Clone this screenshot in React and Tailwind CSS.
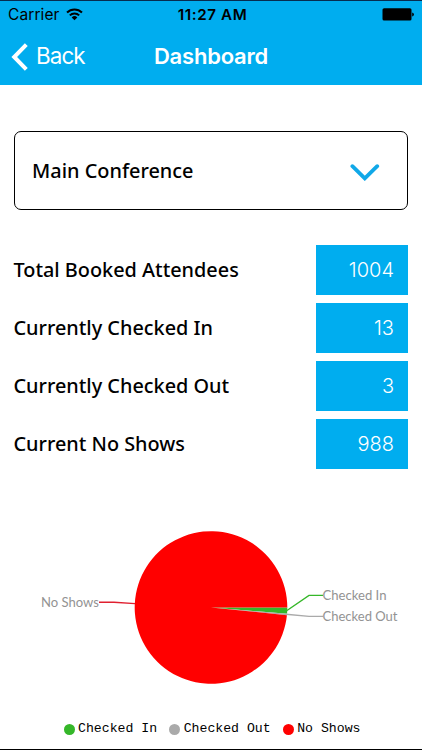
const STATS = [
  { label: 'Total Booked Attendees', value: 1004 },
  { label: 'Currently Checked In', value: 13 },
  { label: 'Currently Checked Out', value: 3 },
  { label: 'Current No Shows', value: 988 },
];

const SLICES = [
  { label: 'Checked In', value: 13, color: '#35b729' },
  { label: 'Checked Out', value: 3, color: '#aaaaaa' },
  { label: 'No Shows', value: 988, color: '#ff0000' },
];

const CX = 211;
const CY = 107.5;
const R = 76.3;

const slicePath = (from, to) => {
  const x1 = CX + R * Math.cos(from);
  const y1 = CY + R * Math.sin(from);
  const x2 = CX + R * Math.cos(to);
  const y2 = CY + R * Math.sin(to);
  return `M${CX} ${CY} L${x1} ${y1} A${R} ${R} 0 ${to - from > Math.PI ? 1 : 0} 1 ${x2} ${y2} Z`;
};

const StatusBar = () => (
  <div className="relative flex h-[28px] items-center justify-between pl-2 pr-[8px] text-black">
    <div className="flex items-center gap-[6px]">
      <span className="text-[15.5px] leading-none tracking-[0.1px]">Carrier</span>
      <svg width="17" height="13" viewBox="0 0 17 13" fill="none" stroke="black" strokeWidth="2" className="mb-[2px]">
        <path d="M1 4.5a10.7 10.7 0 0 1 15 0" />
        <path d="M3.8 7.4a6.7 6.7 0 0 1 9.4 0" />
        <path d="M8.5 12.2 5.7 9.4a4 4 0 0 1 5.6 0Z" fill="black" stroke="none" />
      </svg>
    </div>
    <span className="absolute inset-x-0 pl-[3px] text-center text-[15.2px] font-semibold leading-none tracking-[0.6px]">11:27 AM</span>
    <svg width="32" height="13" viewBox="0 0 32 13" className="mb-[1px]">
      <rect x="0.5" y="0.2" width="29" height="12.4" rx="1.6" fill="black" />
      <path d="M30.2 4.5q1.7.4 1.7 2t-1.7 2Z" fill="black" />
    </svg>
  </div>
);

const NavBar = () => (
  <div className="relative flex h-[55px] items-center pl-[11px] text-white">
    <svg width="18" height="28" viewBox="0 0 18 28" fill="none" stroke="white" strokeWidth="4">
      <path d="M15.3 1.6 3.2 14l12.1 12.4" />
    </svg>
    <span className="ml-[7px] text-[22.4px] leading-none tracking-[-0.9px]">Back</span>
    <h1 className="absolute inset-x-0 pb-[2px] text-center text-[22px] font-semibold leading-none tracking-[-0.2px]">Dashboard</h1>
  </div>
);

const PieChart = () => {
  const total = SLICES.reduce((sum, s) => sum + s.value, 0);
  let angle = 0;
  return (
    <svg width="422" height="210" viewBox="0 0 422 210" className="block">
      {SLICES.map((s) => {
        const from = angle;
        angle += (s.value / total) * Math.PI * 2;
        return <path key={s.label} d={slicePath(from, angle)} fill={s.color} />;
      })}
      <g fill="none" strokeWidth="1.4">
        <path d="M99 102.3h15l21 1.3" stroke="#e02030" />
        <path d="M287 110.5 309 95.4h14" stroke="#35b729" />
        <path d="M286 114.3 309 116.4h14" stroke="#aaaaaa" />
      </g>
      <g fill="#939393" fontFamily="Lato, sans-serif" fontSize="13.5">
        <text x="41" y="107" textLength="58" lengthAdjust="spacingAndGlyphs">No Shows</text>
        <text x="322.5" y="100" textLength="64" lengthAdjust="spacingAndGlyphs">Checked In</text>
        <text x="322.5" y="121" textLength="75" lengthAdjust="spacingAndGlyphs">Checked Out</text>
      </g>
    </svg>
  );
};

const App = () => {
  return (
    <div className="flex h-[750px] w-[422px] flex-col border-b border-black bg-white font-['Inter',sans-serif]">
      <header className="h-[85px] border-t border-[#062c50] bg-[#00adef]">
        <StatusBar />
        <NavBar />
      </header>

      <button className="ml-[13.5px] mr-[14px] mt-[46px] flex h-[79px] items-center justify-between rounded-[7px] border-[1.4px] border-black pl-[17.5px] pr-[27px]">
        <span className="font-['Noto_Sans',sans-serif] text-[19.9px] font-medium text-black">Main Conference</span>
        <svg width="31" height="20" viewBox="0 0 31 20" fill="none" stroke="#10a8e8" strokeWidth="3.8" strokeLinecap="round">
          <path d="M3.4 5.2 15.8 17.4 28.2 5.2" />
        </svg>
      </button>

      <div className="mt-[35px] flex flex-col gap-2 pl-[13.5px] pr-[14px]">
        {STATS.map((s) => (
          <div key={s.label} className="flex h-[50px] items-center justify-between">
            <span className="pb-[1px] font-['Noto_Sans',sans-serif] text-[19.85px] font-medium text-black">{s.label}</span>
            <span className="flex h-full w-[92px] items-center justify-end bg-[#00adef] pr-[14px] text-[20px] font-light text-white">
              {s.value}
            </span>
          </div>
        ))}
      </div>

      <div className="mt-[31px]">
        <PieChart />
      </div>

      <div className="mt-[9px] flex items-center gap-[12px] pl-[63.5px] font-['Liberation_Mono',monospace] text-[13.2px] leading-[20px] text-black">
        {SLICES.map((s) => (
          <div key={s.label} className="flex items-center gap-[3.5px]">
            <span className="h-[11px] w-[11px] rounded-full" style={{ backgroundColor: s.color }} />
            <span>{s.label}</span>
          </div>
        ))}
      </div>
    </div>
  );
};

export default App;
